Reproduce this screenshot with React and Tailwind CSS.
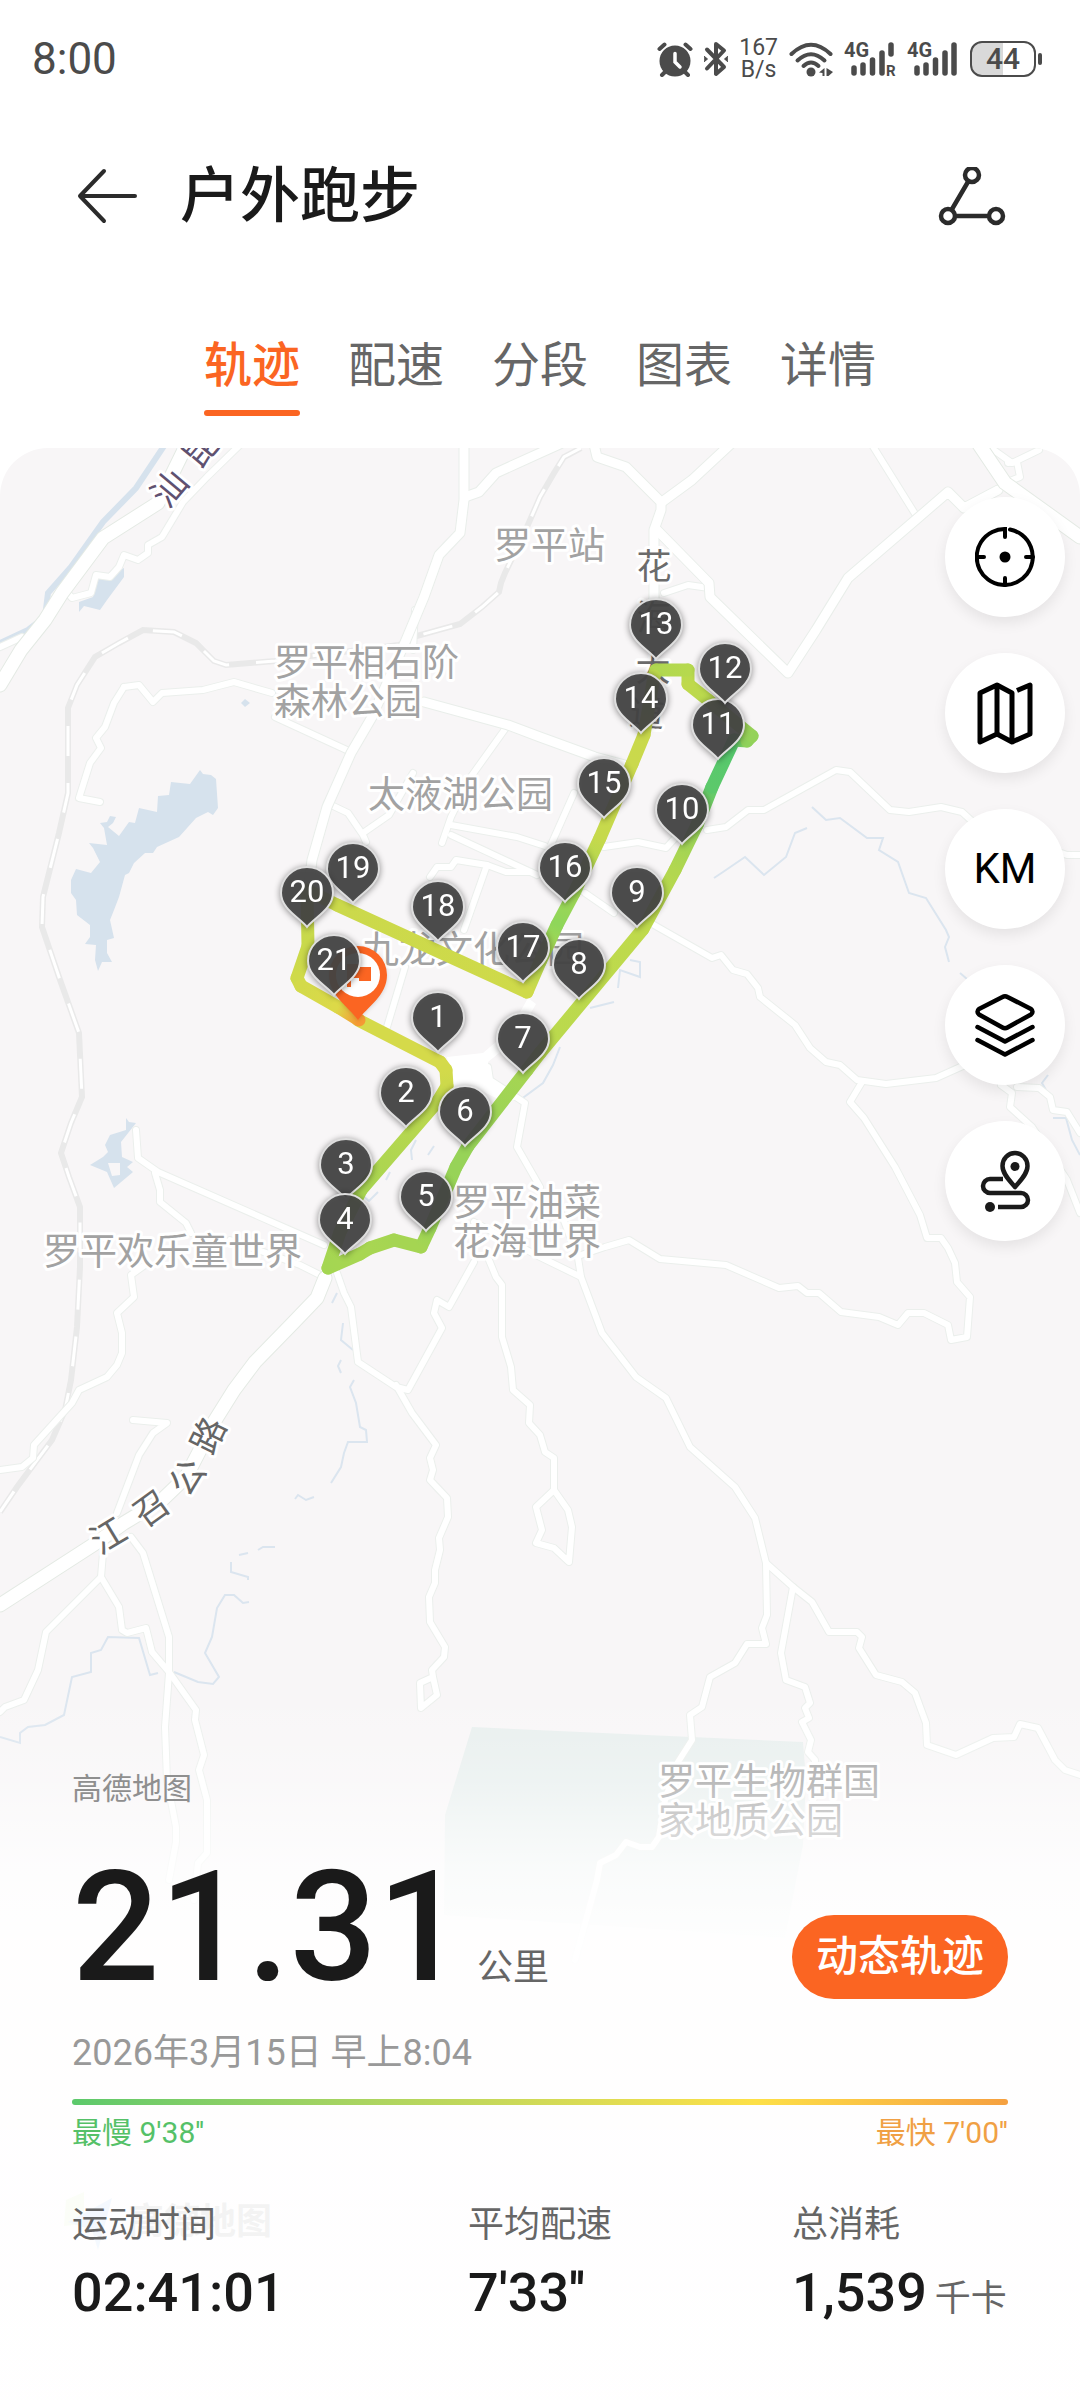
import React, { useState } from "react";

const tabs = ["轨迹", "配速", "分段", "图表", "详情"];

// Track points in order: x, y, pace colour
const track = [
    [358, 1020, "#d5da4a"],
    [440, 1062, "#d5da4a"],
    [446, 1070, "#d3da4a"],
    [447, 1086, "#cdd94b"],
    [438, 1101, "#bdd84e"],
    [361, 1190, "#a8d551"],
    [340, 1232, "#a8d551"],
    [328, 1268, "#a4d652"],
    [360, 1254, "#a8d652"],
    [370, 1248, "#a8d652"],
    [394, 1240, "#a5d552"],
    [421, 1247, "#a5d552"],
    [430, 1228, "#9bd456"],
    [456, 1167, "#97d358"],
    [468, 1146, "#97d358"],
    [527, 1070, "#a6d552"],
    [540, 1053, "#bad94d"],
    [643, 929, "#bfda4c"],
    [675, 870, "#b2d74f"],
    [697, 825, "#94d25a"],
    [712, 787, "#5cc96b"],
    [734, 740, "#55c86d"],
    [747, 741, "#8fd15b"],
    [752, 736, "#94d259"],
    [708, 700, "#b9d94e"],
    [688, 684, "#bfd94c"],
    [688, 670, "#b6d94e"],
    [656, 670, "#b0d850"],
    [654, 676, "#bcd94d"],
    [644, 735, "#c9d94c"],
    [632, 764, "#cad94c"],
    [600, 838, "#c6d94c"],
    [574, 893, "#9fd655"],
    [557, 925, "#8fd65a"],
    [540, 962, "#b4d750"],
    [527, 992, "#cfda4a"],
    [337, 905, "#cbd94b"],
    [307, 890, "#c3d84c"],
    [308, 946, "#c9d94b"],
    [297, 978, "#cfda4a"],
    [301, 986, "#d3da4a"],
    [338, 1007, "#dcd948"],
    [359, 1020, "#f59a34"],
];

const pins = [
    [438, 1052], [406, 1127], [346, 1199], [345, 1254], [426, 1231], [465, 1146], [523, 1073],
    [579, 999], [637, 927], [682, 844], [718, 759], [725, 703], [656, 659], [641, 733],
    [604, 818], [565, 902], [523, 982], [438, 941], [353, 903], [307, 927], [334, 995],
];

const highways = [
    "185,448 158,503 103,538 62,593 45,620 21,650 0,685",
    "976,440 1005,483 1080,537",
    "325,1278 317,1298 293,1323 255,1362 234,1390 214,1422 200,1450 186,1477 162,1500 124,1523 96,1543 0,1605",
];

const mainRoads = [
    "464,440 464,500 460,533 439,555 424,597 406,640 372,717 351,753 327,807 312,860 307,900",
    "465,497 479,492 496,473 540,453 560,444",
    "593,440 597,457 626,467 661,502 661,510 654,530 654,603",
    "735,440 692,480 662,502",
    "657,530 709,583 710,597 788,673 816,630 848,578 919,517 948,492 964,508 998,490",
    "424,702 508,725 540,737 595,757 625,765",
];

const roads = [
    "245,440 207,477 183,502 162,537 148,545 148,553 138,560 124,555 119,567 110,577 96,575 91,593 72,598 65,590",
    "0,647 22,637",
    "415,610 413,650",
    "124,687 139,685 153,702 162,693 203,690 234,682 272,693",
    "275,717 351,752",
    "124,687 114,703 105,727 96,738 101,748 90,763 79,798 100,802",
    "508,725 470,778 451,817 442,843",
    "327,803 348,813 363,835 366,842",
    "363,833 389,815 413,773",
    "451,825 517,837 545,846",
    "451,835 537,875",
    "430,877 437,867 451,867 456,860 487,865 506,872 530,872",
    "487,865 464,930",
    "405,967 387,1027",
    "664,593 688,585 709,588",
    "869,440 917,517",
    "1008,463 1017,462 1020,477 1005,483 1000,470",
    "991,448 1012,463 1039,450",
    "707,830 726,827 748,810 764,810 836,770 850,772 890,810 909,812 941,807 962,812 974,823 1067,855 1080,855",
    "604,847 638,842 666,848 678,835",
    "574,793 550,847",
    "585,893 614,913",
    "654,925 712,958 721,955 733,970 747,974 758,988 760,997 795,1025 810,1048 826,1062 840,1065 857,1080 886,1084 936,1078 965,1065",
    "1001,1085 1012,1093 1010,1107 1032,1127 1067,1180 1080,1213",
    "1017,1087 1039,1088 1050,1097 1053,1110 1067,1112 1080,1133",
    "862,1082 850,1102 864,1118 895,1167 920,1215 927,1238 941,1238 948,1248 955,1263 957,1282 970,1297 967,1337 951,1340 948,1325 924,1313 908,1313 898,1325 879,1317 841,1312 819,1293 807,1293 798,1286 779,1288 726,1265 660,1259 629,1240 605,1247 578,1256",
    "474,1222 540,1257 581,1277 602,1333 636,1377 666,1398 690,1447 735,1487 755,1518 766,1563 793,1587 812,1602 829,1632 857,1632 862,1637 859,1648 876,1675 902,1682 915,1693 926,1723 927,1745 956,1755 993,1738 1014,1737 1020,1724 1038,1728 1055,1760 1065,1770 1080,1775",
    "560,1210 578,1258 581,1277",
    "766,1563 767,1615 762,1628 766,1644 747,1644 735,1663 710,1677 702,1707 690,1715 692,1740 678,1762 665,1800 659,1837 652,1847 640,1847 626,1842 616,1855 600,1863 597,1880 575,1960",
    "793,1587 781,1653 786,1680 805,1687 810,1703 805,1708 809,1718 802,1722 811,1740 808,1752 815,1760 812,1830",
    "489,1260 496,1277 502,1285 502,1337 511,1367 513,1390 530,1405 529,1423 540,1435 545,1452 554,1458 554,1490 568,1510 572,1527 569,1562 554,1548 536,1543 542,1530 536,1507 554,1490",
    "474,1262 449,1307 437,1300 434,1313 442,1328 408,1390 396,1387 358,1362 351,1307 344,1293 337,1273",
    "396,1385 412,1413 436,1445 430,1458 433,1470 430,1480 447,1498 448,1517 439,1538 440,1550 435,1570 435,1583 429,1597 430,1622 445,1647 444,1657 432,1670 433,1677 420,1683 421,1708 437,1695 433,1677",
    "136,1130 138,1158 158,1172 324,1245",
    "155,1173 160,1190 160,1202 186,1223 191,1233",
    "230,1240 300,1265 324,1277",
    "145,1265 131,1275 134,1297 117,1313 122,1333 122,1353 117,1365 107,1377 79,1390 72,1403 34,1445 33,1458 22,1467 0,1470",
    "133,1420 167,1423 153,1433 139,1455 117,1513",
    "131,1537 143,1553 169,1637 169,1673 165,1727 167,1780 176,1827 176,1842 169,1880",
    "103,1553 101,1577 119,1607 122,1630 127,1633 146,1628 152,1652 169,1672 196,1710 195,1720 204,1755 199,1770 207,1800 207,1853 198,1863 194,1900",
    "101,1577 46,1632 38,1670 24,1700 5,1707 0,1712",
    "488,1067 490,1080 525,1103 517,1147 540,1187",
];

const railways = [
    "581,448 564,457 554,473 540,497 527,527 505,573 501,583 499,592 482,607 460,624 413,637 399,645 310,656 275,661 226,665 214,661 196,643 174,632 143,630 119,643 95,657 77,685 68,708 68,793 59,833 43,897 42,927 59,977 79,1033 82,1097 71,1123 61,1153 69,1177 80,1207 80,1267 77,1327 71,1380 65,1410 52,1440 17,1487 0,1512",
];

const streams = [
    "0,1737 20,1743 20,1733 28,1727 45,1725 64,1715 72,1677 91,1672 91,1653 101,1650 108,1637 139,1638 150,1675 158,1673",
    "174,1672 198,1682 213,1684 219,1677 205,1653 212,1637 217,1608 225,1595 234,1595 243,1603 249,1602",
    "248,1580 248,1577 231,1572 231,1562",
    "258,1550 263,1547 275,1547",
    "239,1555 248,1553",
    "331,1483 341,1467 344,1453 348,1442 367,1442 366,1430 360,1427 356,1403 350,1387 354,1380",
    "341,1373 338,1366 341,1360",
    "353,1350 341,1340 343,1323",
    "332,1303 337,1293",
    "295,1499 298,1495 306,1500 314,1497",
    "714,878 723,872 745,857 764,875 786,857 795,833 807,828",
    "812,807 826,820 840,818 867,838 883,838 879,850 898,862 909,893 926,898 946,930 949,937 945,947 949,962",
    "960,973 967,979",
    "560,1047 553,1065 543,1083 520,1100",
    "630,960 640,962 640,977 620,970 618,988",
    "590,1008 614,1002",
    "412,1160 411,1150 416,1140",
    "428,1155 434,1146",
    "386,1180 390,1172",
    "362,1195 369,1201 378,1192",
    "1048,1075 1042,1083 1046,1090",
    "1053,1118 1066,1118 1072,1140 1080,1155",
];

const placeLabels = [
    { x: 494, y: 545, text: "罗平站" },
    { x: 274, y: 662, text: "罗平相石阶" },
    { x: 274, y: 701, text: "森林公园" },
    { x: 368, y: 794, text: "太液湖公园" },
    { x: 362, y: 949, text: "九龙文化公园" },
    { x: 453, y: 1202, text: "罗平油菜" },
    { x: 453, y: 1241, text: "花海世界" },
    { x: 43, y: 1251, text: "罗平欢乐童世界" },
    { x: 658, y: 1781, text: "罗平生物群国" },
    { x: 658, y: 1820, text: "家地质公园" },
];

// Road names are set one character at a time along the road
const roadLabels = [
    { x: 169, y: 488, angle: -50, text: "汕", color: "#5f5170" },
    { x: 200, y: 449, angle: -50, text: "昆", color: "#5f5170" },
    { x: 654, y: 566, angle: 0, text: "花", color: "#6b6b6b" },
    { x: 654, y: 617, angle: 0, text: "海", color: "#6b6b6b" },
    { x: 653, y: 668, angle: 0, text: "大", color: "#6b6b6b" },
    { x: 647, y: 713, angle: 5, text: "道", color: "#6b6b6b" },
    { x: 108, y: 1535, angle: -31, text: "江", color: "#666666" },
    { x: 151, y: 1508, angle: -36, text: "召", color: "#666666" },
    { x: 187, y: 1477, angle: -55, text: "公", color: "#666666" },
    { x: 208, y: 1435, angle: -64, text: "路", color: "#666666" },
];

const StatusBar = () => (
    <div className="flex h-[118px] items-center justify-between pl-8 pr-[38px] text-[#4b4b4b]">
        <time className="text-[44px] leading-none">8:00</time>

        <div className="flex items-center gap-[11px]">
            {/* Alarm */}
            <svg className="h-9 w-9" viewBox="0 0 36 36" fill="none" stroke="currentColor" strokeWidth="4" strokeLinecap="round">
                <circle cx="18" cy="20" r="15.5" fill="currentColor" stroke="none" />
                <path d="M2.500 8 L7.500 3.500 M33.500 8 L28.500 3.500 M8 31 L5 34 M28 31 L31 34" />
                <path d="M18 12.500 V21 L23 26" stroke="white" strokeWidth="3.500" />
            </svg>

            {/* Bluetooth */}
            <svg className="h-9 w-6" viewBox="0 0 24 36" fill="none" stroke="currentColor" strokeWidth="4" strokeLinejoin="round" strokeLinecap="round">
                <path d="M3 8.500 L20 26 L12 33 V3 L20 9.500 L3 27.500" />
                <path d="M0.500 15.500 L3.500 18 L0.500 20.500 Z M23.500 15.500 L20.500 18 L23.500 20.500 Z" fill="currentColor" strokeWidth="1" />
            </svg>

            <div className="text-center text-[23px] leading-[22px]">
                <div>167</div>
                <div>B/s</div>
            </div>

            {/* Wi-Fi */}
            <svg className="h-9 w-11" viewBox="0 0 44 36" fill="none" stroke="currentColor" strokeWidth="4" strokeLinecap="round">
                <path d="M2.500 13 Q22 -5.500 41.500 13" />
                <path d="M8.500 19.500 Q22 7 35.500 19.500" />
                <path d="M14.500 25 Q22 18 29.500 25" />
                <circle cx="22" cy="31" r="4.500" fill="currentColor" stroke="none" />
                <path d="M30 31.500 L35.500 27 V35 H33.500 V32 Z M37.500 27 L44 31 L39.500 35 H37.500 Z" fill="currentColor" stroke="none" />
            </svg>

            {["R", ""].map((mark) => (
                <svg key={mark} className="h-[46px] w-[52px]" viewBox="0 -5 52 46" fill="none" stroke="currentColor" strokeWidth="5.500" strokeLinecap="round">
                    <path d="M10 27 V32 M19 24 V32 M28.500 19 V32 M38 12 V32" />
                    <path d={mark ? "M47 4 V13" : "M47 4 V32"} />
                    <text x="0" y="16" fontSize="20" fontWeight="700" fill="currentColor" stroke="none">4G</text>
                    {mark && <text x="42" y="35" fontSize="15" fontWeight="700" fill="currentColor" stroke="none">{mark}</text>}
                </svg>
            ))}

            {/* Battery */}
            <div className="flex items-center gap-0.5">
                <div className="flex h-9 w-[66px] items-center justify-center rounded-xl border-2 border-[#4b4b4b] bg-linear-to-r from-[#d9d9d9] from-50% to-white to-50% text-[30px] font-medium leading-none">
                    44
                </div>
                <div className="h-3 w-1 rounded-full bg-[#4b4b4b]" />
            </div>
        </div>
    </div>
);

const MapLines = ({ lines, width, casing }) => (
    <g fill="none" strokeLinecap="round" strokeLinejoin="round">
        {lines.map((points) => (
            <polyline key={points} points={points} stroke={casing} strokeWidth={width + 2} />
        ))}
        {lines.map((points) => (
            <polyline key={points} points={points} stroke="#ffffff" strokeWidth={width} />
        ))}
    </g>
);

const TrackMap = () => (
    <svg className="absolute inset-0 h-full w-full" viewBox="0 448 1080 1952" preserveAspectRatio="xMidYMin slice">
        <rect x="0" y="440" width="1080" height="1960" fill="#f8f6f7" />

        {/* Park and water */}
        <polygon points="472,1727 803,1742 806,1780 803,1845 785,1938 444,1915 445,1815" fill="#e8efee" />
        <g fill="#d6e2ed">
            <polygon points="124,568 124,577 107,600 100,610 84,606 79,612 79,602 93,597 97,580 110,575" />
            <polygon points="241,703 245,699 250,703 245,707" />
            <polygon points="200,770 203,774 211,775 216,779 218,808 213,815 208,812 196,818 179,837 157,847 153,853 145,853 134,863 129,873 125,875 119,897 114,910 110,920 114,938 107,940 107,953 112,962 102,962 98,971 95,960 96,945 85,944 90,937 90,925 77,915 76,900 71,893 71,880 76,869 91,873 100,862 93,848 89,843 107,845 104,828 100,823 107,822 110,816 116,817 113,823 108,827 119,836 129,822 135,823 139,808 157,812 158,796 169,795 171,782 190,784" />
            <path d="M126 1118 L129 1122 L136 1123 L121 1142 L122 1157 L133 1162 L127 1167 L133 1172 L114 1188 L107 1172 L90 1165 L103 1157 L108 1152 L105 1145 L110 1135 L126 1130 Z M108 1163 L120 1163 L120 1175 L112 1176 Z" fillRule="evenodd" />
        </g>
        <polyline points="168,440 136,488 103,522 71,567 48,593 45,617 28,630 0,643" fill="none" stroke="#d6e2ed" strokeWidth="6" />
        <g fill="none" stroke="#dbe5ef" strokeWidth="2">
            {streams.map((points) => (
                <polyline key={points} points={points} />
            ))}
        </g>

        {/* Railway */}
        {railways.map((points) => (
            <g key={points} fill="none">
                <polyline points={points} stroke="#e9e9e9" strokeWidth="6" />
                <polyline points={points} stroke="#ffffff" strokeWidth="3" strokeDasharray="30 27" />
            </g>
        ))}

        <MapLines lines={roads} width={6} casing="#ebefec" />
        <MapLines lines={mainRoads} width={9} casing="#e9eeea" />
        <MapLines lines={highways} width={13} casing="#e4eae4" />
        <polygon points="447,1057 483,1053 510,1030 528,998 536,1004 515,1040 488,1062 490,1078 520,1100 500,1100 470,1085 452,1088" fill="#ffffff" />

        {/* Names */}
        <g fontSize="37" fill="#a2a2a2" stroke="#ffffff" strokeWidth="6" strokeLinejoin="round" paintOrder="stroke">
            {placeLabels.map(({ x, y, text }) => (
                <text key={text} x={x} y={y + 14}>{text}</text>
            ))}
        </g>
        <g fontSize="35" stroke="#ffffff" strokeWidth="6" strokeLinejoin="round" paintOrder="stroke" textAnchor="middle">
            {roadLabels.map(({ x, y, angle, text, color }) => (
                <text key={text} y="13" fill={color} transform={`translate(${x} ${y}) rotate(${angle})`}>{text}</text>
            ))}
        </g>

        {/* Map provider mark */}
        <path d="M66 2200 L84 2192 L84 2224 L64 2226 Z" fill="#b8e080" />
        <path d="M112 2198 L68 2222 L92 2230 L98 2250 Z" fill="#4090f0" />
        <text x="128" y="2234" fontSize="36" fontWeight="700" fill="#333333">高德地图</text>

        {/* Track */}
        <defs>
            {track.slice(1).map(([x, y, color], i) => (
                <linearGradient key={i} id={`pace-${i}`} gradientUnits="userSpaceOnUse" x1={track[i][0]} y1={track[i][1]} x2={x} y2={y}>
                    <stop offset="0" stopColor={track[i][2]} />
                    <stop offset="1" stopColor={color} />
                </linearGradient>
            ))}
        </defs>
        {track.slice(1).map(([x, y], i) => (
            <path key={i} d={`M${track[i][0]} ${track[i][1]} L${x} ${y}`} stroke={`url(#pace-${i})`} strokeWidth="13" strokeLinecap="round" />
        ))}

        {/* Finish */}
        <g transform="translate(358 1020)" className="drop-shadow-sm">
            <path d="M0 0 C-9 -13 -29 -24 -29 -45 A29 29 0 1 1 29 -45 C29 -24 9 -13 0 0 Z" fill="#fb6522" />
            <circle cx="0" cy="-45" r="22" fill="#ffffff" />
            <path d="M-11 -56 H2 V-53 H13 V-39 H1 V-42 H-7 V-33 H-11 Z" fill="#fb6522" />
        </g>

        {/* Kilometre pins */}
        {pins.map(([x, y], i) => (
            <g key={i} transform={`translate(${x} ${y})`} className="drop-shadow-[0_1px_3px_rgba(0,0,0,0.45)]">
                <path d="M0 0 C-7 -9 -26 -18 -26 -34 A26 26 0 1 1 26 -34 C26 -18 7 -9 0 0 Z" fill="#444444" fillOpacity="0.92" stroke="#dedede" strokeWidth="2" />
                <text y="-25" fontSize="31" textAnchor="middle" fill="#ffffff">{i + 1}</text>
            </g>
        ))}
    </svg>
);

const mapTools = [
    {
        label: "定位",
        icon: (
            <svg className="h-15 w-15" viewBox="0 0 60 60" fill="none" stroke="currentColor" strokeWidth="4" strokeLinecap="round">
                <path d="M35 2.500 A28 28 0 1 1 30 2 V10" />
                <path d="M2 30 H9 M51 30 H58 M30 51 V58" />
                <circle cx="30" cy="30" r="5.500" fill="currentColor" stroke="none" />
            </svg>
        ),
    },
    {
        label: "地图",
        icon: (
            <svg className="h-16 w-15" viewBox="0 0 60 64" fill="none" stroke="currentColor" strokeWidth="5" strokeLinejoin="round">
                <path d="M5 12 L22 4 V53 L5 61 Z" />
                <path d="M22 4 L37 12 V61 L22 53" />
                <path d="M42 9.500 L55 4 V53 L37 61" />
            </svg>
        ),
    },
    { label: "公里标记", icon: <span className="text-[42px] leading-none">KM</span> },
    {
        label: "图层",
        icon: (
            <svg className="h-16 w-15" viewBox="0 0 60 64" fill="none" stroke="currentColor" strokeWidth="4.500" strokeLinecap="round" strokeLinejoin="round">
                <path d="M27.500 4 Q30 2.500 32.500 4 L56 16 Q59 18.500 56 21.500 L32.500 34.500 Q30 36 27.500 34.500 L4 21.500 Q1 18.500 4 16 Z" />
                <path d="M2.500 34 L30 48.500 L57.500 34" />
                <path d="M2.500 47 L30 61.500 L57.500 47" />
            </svg>
        ),
    },
    {
        label: "路线",
        icon: (
            <svg className="h-16 w-15 text-[#1a1a1a]" viewBox="0 0 60 64" fill="none" stroke="currentColor" strokeWidth="4.500" strokeLinejoin="round">
                <path d="M40 38 C35 32 27.500 25 27.500 17 A12.500 13 0 0 1 52.500 17 C52.500 25 45 32 40 38 Z" />
                <circle cx="40" cy="17.500" r="4.500" fill="currentColor" stroke="none" />
                <path d="M28 30 H15 A7 7 0 0 0 15 44 H46 A7 7 0 0 1 46 58 H23" />
                <circle cx="15" cy="58" r="5" fill="currentColor" stroke="none" />
            </svg>
        ),
    },
];

const stats = [
    { label: "运动时间", value: "02:41:01" },
    { label: "平均配速", value: "7'33''" },
    { label: "总消耗", value: "1,539", unit: "千卡" },
];

const App = () => {
    const [activeTab, setActiveTab] = useState("轨迹");

    return (
        <main className="flex min-h-screen flex-col bg-white font-['Roboto','Noto_Sans_CJK_SC',sans-serif] text-[#1a1a1a]">
            <StatusBar />

            <header className="flex h-[158px] items-center px-[72px]">
                <button type="button" aria-label="返回" className="mr-9 text-[#2b2b2b]">
                    <svg className="h-[60px] w-[72px]" viewBox="0 0 72 60" fill="none" stroke="currentColor" strokeWidth="4" strokeLinecap="round" strokeLinejoin="round">
                        <path d="M32 4 L8 29 L32 54 M8 29 H63" />
                    </svg>
                </button>
                <h1 className="text-[60px] font-medium leading-none">户外跑步</h1>
                <button type="button" aria-label="分享" className="ml-auto text-[#2b2b2b]">
                    <svg className="h-[60px] w-[72px]" viewBox="0 0 72 60" fill="none" stroke="currentColor" strokeWidth="4.500">
                        <circle cx="36" cy="8" r="7" />
                        <circle cx="12" cy="49" r="7" />
                        <circle cx="60" cy="49" r="7" />
                        <path d="M32.500 14 L15.500 43 M19 49 H53" />
                    </svg>
                </button>
            </header>

            <nav role="tablist" className="flex justify-center gap-12 pb-8 pt-[54px]">
                {tabs.map((tab) => (
                    <button
                        key={tab}
                        type="button"
                        role="tab"
                        aria-selected={tab === activeTab}
                        onClick={() => setActiveTab(tab)}
                        className={
                            tab === activeTab
                                ? "text-[48px] font-medium leading-[72px] text-[#fb6522]"
                                : "text-[48px] leading-[72px] text-[#666666]"
                        }
                    >
                        {tab}
                        <span className={tab === activeTab ? "mt-2 block h-1.5 rounded-full bg-[#fb6522]" : "mt-2 block h-1.5"} />
                    </button>
                ))}
            </nav>

            <section className="relative flex flex-1 flex-col overflow-hidden rounded-t-[48px]">
                <TrackMap />

                {/* Map tools */}
                <div className="relative flex flex-col items-end gap-9 pr-[15px] pt-[49px]">
                    {mapTools.map(({ label, icon }) => (
                        <button
                            key={label}
                            type="button"
                            aria-label={label}
                            className="flex h-[120px] w-[120px] items-center justify-center rounded-full bg-white text-black shadow-[0_6px_14px_rgba(0,0,0,0.08)]"
                        >
                            {icon}
                        </button>
                    ))}
                </div>

                {/* Summary */}
                <div className="relative mt-auto bg-[linear-gradient(to_bottom,rgba(255,255,255,0)_0%,rgba(255,255,255,0.27)_13%,rgba(255,255,255,0.48)_18%,rgba(255,255,255,0.75)_25%,rgba(255,255,255,0.93)_35%,rgba(255,255,255,0.95)_100%)] px-[72px] pb-[69px] pt-20">
                    <p className="text-[30px] leading-10 text-[#8f8f8f]">高德地图</p>

                    <div className="mt-[42px] flex items-end justify-between">
                        <p className="flex items-baseline gap-3">
                            <span className="text-[154px] font-medium leading-none">21.31</span>
                            <span className="text-[36px] leading-none text-[#666666]">公里</span>
                        </p>
                        <button type="button" className="mb-1.5 h-[84px] rounded-full bg-[#fb6522] px-6 text-[42px] font-medium leading-none text-white">
                            动态轨迹
                        </button>
                    </div>

                    <p className="mt-6 text-[36px] leading-[48px] text-[#999999]">2026年3月15日 早上8:04</p>

                    <div className="mt-[22px] h-1.5 rounded-full bg-linear-to-r from-[#5bc96b] via-[#fde047] via-73% to-[#f5a040]" />
                    <div className="mt-2 flex justify-between text-[30px] leading-10">
                        <span className="text-[#55c168]">最慢 9'38''</span>
                        <span className="text-[#f0a044]">最快 7'00''</span>
                    </div>

                    <dl className="mt-12 grid grid-cols-[11fr_9fr_6fr]">
                        {stats.map(({ label, value, unit }) => (
                            <div key={label}>
                                <dt className="text-[36px] leading-[48px] text-[#666666]">{label}</dt>
                                <dd className="mt-3 flex items-baseline gap-2 whitespace-nowrap text-[54px] font-medium leading-[64px]">
                                    {value}
                                    {unit && <span className="text-[36px] font-normal text-[#666666]">{unit}</span>}
                                </dd>
                            </div>
                        ))}
                    </dl>
                </div>
            </section>
        </main>
    );
};

export default App;
